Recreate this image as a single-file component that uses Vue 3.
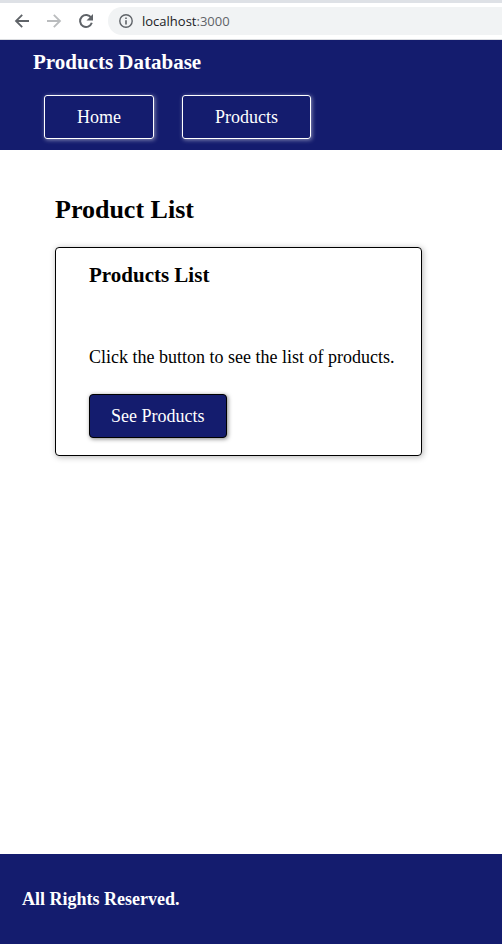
<script setup>
import { ref } from 'vue'

const links = [
  { label: 'Home', href: '#home' },
  { label: 'Products', href: '#products' },
]
const address = ref({ host: 'localhost', port: ':3000' })
</script>

<template>
  <div class="page">
    <div class="toolbar">
      <button class="tool" type="button" aria-label="Back">
        <svg viewBox="0 0 16 16" fill="none" stroke="#5f6368" stroke-width="1.8">
          <path d="M15 8H2.5M8.2 1.8L2 8l6.2 6.2" />
        </svg>
      </button>
      <button class="tool" type="button" aria-label="Forward" disabled>
        <svg viewBox="0 0 16 16" fill="none" stroke="#babcbe" stroke-width="1.8">
          <path d="M1 8h12.5M7.8 1.8L14 8l-6.2 6.2" />
        </svg>
      </button>
      <button class="tool" type="button" aria-label="Reload">
        <svg viewBox="0 0 16 16">
          <path d="M13.2 4.8A6 6 0 1 0 13.8 9.8" fill="none" stroke="#5f6368" stroke-width="2" />
          <path d="M15 1v6.5H8.5z" fill="#5f6368" />
        </svg>
      </button>
      <div class="omnibox">
        <svg class="info" viewBox="0 0 14 14" aria-hidden="true">
          <circle cx="7" cy="7" r="6.2" fill="none" stroke="#5f6368" stroke-width="1.4" />
          <path d="M6.2 6.2h1.6v4.3H6.2zM6.2 3.4h1.6V5H6.2z" fill="#5f6368" />
        </svg>
        <div class="address" role="textbox" aria-label="Address" contenteditable="true" spellcheck="false"><span>{{ address.host }}</span><span class="port">{{ address.port }}</span></div>
      </div>
    </div>

    <header class="header">
      <h3 class="brand">Products Database</h3>
      <nav class="nav">
        <a v-for="link in links" :key="link.label" class="nav-link" :href="link.href">{{ link.label }}</a>
      </nav>
    </header>

    <main class="main">
      <h2 class="heading">Product List</h2>
      <section class="card">
        <h3 class="card-title">Products List</h3>
        <p class="card-text">Click the button to see the list of products.</p>
        <button class="action" type="button">See Products</button>
      </section>
    </main>

    <footer class="footer">
      <h4 class="rights">All Rights Reserved.</h4>
    </footer>
  </div>
</template>

<style>
body {
  background: #fff;
}
</style>

<style scoped>
.page {
  box-sizing: border-box;
  display: flex;
  flex-direction: column;
  min-height: 100vh;
  padding-bottom: 4px;
  font-family: "Liberation Serif", "Times New Roman", serif;
  font-size: 18px;
  line-height: 20px;
  color: #000;
}

h2,
h3,
h4,
p {
  margin: 0;
}

.toolbar {
  display: flex;
  align-items: center;
  gap: 16px;
  padding: 4px 0 4px 14px;
  border-top: 3px solid #dee1e6;
  border-bottom: 1px solid #dadce0;
  background: #fff;
}

.tool {
  width: 16px;
  height: 16px;
  padding: 0;
  border: 0;
  background: none;
}

.tool svg {
  display: block;
  width: 16px;
  height: 16px;
}

.omnibox {
  display: flex;
  flex: 1;
  align-items: center;
  gap: 9px;
  height: 28px;
  margin-left: -2px;
  padding-left: 11px;
  border-radius: 14px 0 0 14px;
  background: #f1f3f4;
}

.info {
  width: 14px;
  height: 14px;
}

.address {
  flex: 1;
  outline: 0;
  font-family: "Open Sans", sans-serif;
  font-size: 13px;
  line-height: 20px;
  color: #202124;
}

.port {
  color: #5f6368;
}

.header {
  padding: 12px 33px 11px;
  background: #141c6e;
  color: #fff;
}

.brand,
.card-title {
  font-size: 21px;
  line-height: 20px;
}

.nav {
  display: flex;
  gap: 28px;
  margin-top: 23px;
  padding-left: 11px;
}

.nav-link {
  padding: 11px 32px;
  border: 1px solid #fff;
  border-radius: 3px;
  box-shadow: 1px 1px 4px rgba(255, 255, 255, 0.5);
  color: #fff;
  text-decoration: none;
}

.main {
  flex: 1;
  padding: 45px 55px;
}

.heading {
  font-size: 26px;
  line-height: 30px;
}

.card {
  width: fit-content;
  margin-top: 22px;
  padding: 17px 27px 17px 33px;
  border: 1px solid #000;
  border-radius: 4px;
  box-shadow: 1px 1px 6px rgba(0, 0, 0, 0.3);
}

.card-text {
  margin: 62px 0 27px;
}

.action {
  display: block;
  padding: 11px 21px;
  border: 1px solid #000;
  border-radius: 4px;
  background: #141c6e;
  box-shadow: 1px 1px 4px rgba(0, 0, 0, 0.5);
  color: #fff;
  font: inherit;
}

.footer {
  padding: 35px 22px;
  background: #141c6e;
  color: #fff;
}

.rights {
  font-size: 18px;
  line-height: 20px;
}
</style>
